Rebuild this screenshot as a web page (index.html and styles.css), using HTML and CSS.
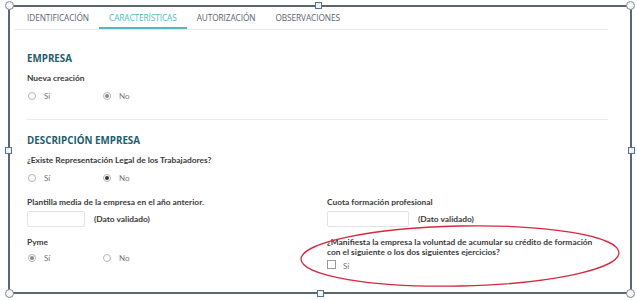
FILE: index.html
```html
<!DOCTYPE html>
<html lang="es">
<head>
   <meta charset="UTF-8">
   <title>Características</title>
   <link rel="stylesheet" href="styles.css">
</head>
<body>
    <div class="frame">
        <!-- Tabs -->
        <ul class="tabs">
            <li>IDENTIFICACIÓN</li>
            <li class="active">CARACTERÍSTICAS</li>
            <li>AUTORIZACIÓN</li>
            <li>OBSERVACIONES</li>
        </ul>

        <div class="content">
            <h2>EMPRESA</h2>
            <div class="label">Nueva creación</div>
            <div class="options">
                <span class="option"><span class="radio"></span>Sí</span>
                <span class="option"><span class="radio checked light"></span>No</span>
            </div>

            <div class="divider"></div>

            <h2 class="second">DESCRIPCIÓN EMPRESA</h2>
            <div class="label">¿Existe Representación Legal de los Trabajadores?</div>
            <div class="options">
                <span class="option"><span class="radio"></span>Sí</span>
                <span class="option"><span class="radio checked"></span>No</span>
            </div>

            <div class="grid">
                <div class="field">
                    <div class="label">Plantilla media de la empresa en el año anterior.</div>
                    <div class="input-row">
                        <span class="input small"></span>
                        <span class="note">(Dato validado)</span>
                    </div>
                </div>
                <div class="field">
                    <div class="label">Cuota formación profesional</div>
                    <div class="input-row">
                        <span class="input wide"></span>
                        <span class="note">(Dato validado)</span>
                    </div>
                </div>
                <div class="field">
                    <div class="label">Pyme</div>
                    <div class="options">
                        <span class="option"><span class="radio checked light"></span>Sí</span>
                        <span class="option"><span class="radio"></span>No</span>
                    </div>
                </div>
                <div class="field">
                    <div class="label">¿Manifiesta la empresa la voluntad de acumular su crédito de formación<br>con el siguiente o los dos siguientes ejercicios?</div>
                    <div class="check-row">
                        <span class="checkbox"></span>Sí
                    </div>
                </div>
            </div>
        </div>

        <!-- red annotation -->
        <svg class="ellipse" width="637" height="300" viewBox="0 0 637 300">
            <ellipse cx="460" cy="256" rx="159" ry="30" transform="rotate(-1.2 460 256)" fill="none" stroke="#d6283f" stroke-width="1.3"/>
        </svg>

        <!-- selection handles -->
        <span class="handle round tl"></span>
        <span class="handle round tr"></span>
        <span class="handle round bl"></span>
        <span class="handle round br"></span>
        <span class="handle square tm"></span>
        <span class="handle square bm"></span>
        <span class="handle square ml"></span>
        <span class="handle square mr"></span>
    </div>
</body>
</html>
```

FILE: styles.css
```css
* {
    margin: 0;
    padding: 0;
    box-sizing: border-box;
}

body {
    font-family: "Lato", "Open Sans", sans-serif;
    background-color: #ffffff;
    width: 637px;
    height: 300px;
    overflow: hidden;
}

.frame {
    position: relative;
    margin: 5px 0 0 8px;
    width: 624px;
    height: 289px;
    border: 2px solid #5b6770;
}

.tabs {
    list-style: none;
    display: flex;
    margin-left: 5px;
    width: 593px;
    height: 23px;
    padding-left: 2px;
    border-bottom: 1px solid #e8e8e8;
}

.tabs li {
    font-family: "Open Sans", sans-serif;
    font-size: 8.3px;
    color: #5a6470;
    padding: 0 10px;
    line-height: 21px;
    letter-spacing: -0.1px;
}

.tabs li.active {
    color: #55b7c4;
    border-bottom: 2px solid #55b7c4;
}

.content {
    padding-left: 17px;
}

h2 {
    font-family: "Open Sans", sans-serif;
    font-size: 9.8px;
    font-weight: 700;
    color: #1d5d6c;
    line-height: 12px;
    margin-top: 23px;
}

h2.second {
    margin-top: 15px;
}

.label {
    font-size: 8.4px;
    font-weight: 700;
    color: #3a3a3a;
    line-height: 10px;
    margin-top: 8px;
}

.options {
    display: flex;
    margin-top: 7px;
    height: 12px;
}

.option {
    display: flex;
    align-items: center;
    width: 75px;
    font-size: 8px;
    color: #777;
}

.radio {
    width: 8px;
    height: 8px;
    border: 1px solid #b5b5b5;
    border-radius: 50%;
    margin: 0 8px 0 1px;
    position: relative;
}

.radio.checked::after {
    content: "";
    position: absolute;
    top: 1px;
    left: 1px;
    width: 4px;
    height: 4px;
    border-radius: 50%;
    background-color: #333;
}

.radio.checked.light::after {
    background-color: #8a8a8a;
}

.divider {
    margin-top: 17px;
    width: 581px;
    border-top: 1px solid #ececec;
}

.grid {
    display: grid;
    grid-template-columns: 300px 300px;
    row-gap: 10px;
    margin-top: 13px;
}

.grid .label {
    margin-top: 0;
}

.grid .options {
    margin-top: 5px;
}

.input-row {
    display: flex;
    align-items: center;
    margin-top: 4px;
    gap: 9px;
}

.input {
    display: block;
    height: 16px;
    border: 1px solid #e2e2e2;
    border-radius: 2px;
}

.input.small {
    width: 58px;
}

.input.wide {
    width: 82px;
}

.note {
    font-size: 8.4px;
    font-weight: 700;
    color: #3a3a3a;
}

.check-row {
    display: flex;
    align-items: center;
    margin-top: 3px;
    height: 12px;
    font-size: 8px;
    color: #777;
}

.checkbox {
    width: 9px;
    height: 9px;
    border: 1px solid #999;
    margin: 0 7px 4px 0;
}

.ellipse {
    position: absolute;
    left: -10px;
    top: -7px;
    pointer-events: none;
}

.handle {
    position: absolute;
    background-color: #eaf4fa;
    border: 1px solid #5b7282;
}

.handle.round {
    width: 9px;
    height: 9px;
    border-radius: 50%;
    background-color: #f3f6f8;
    border-color: #7d8a93;
}

.handle.square {
    width: 7px;
    height: 7px;
}

.tl { left: -5px; top: -6px; }
.tr { right: -5px; top: -6px; }
.bl { left: -5px; bottom: -6px; }
.br { right: -5px; bottom: -6px; }
.tm { left: 305px; top: -5px; }
.bm { left: 307px; bottom: -5px; }
.ml { left: -5px; top: 140px; }
.mr { right: -5px; top: 140px; }
```
